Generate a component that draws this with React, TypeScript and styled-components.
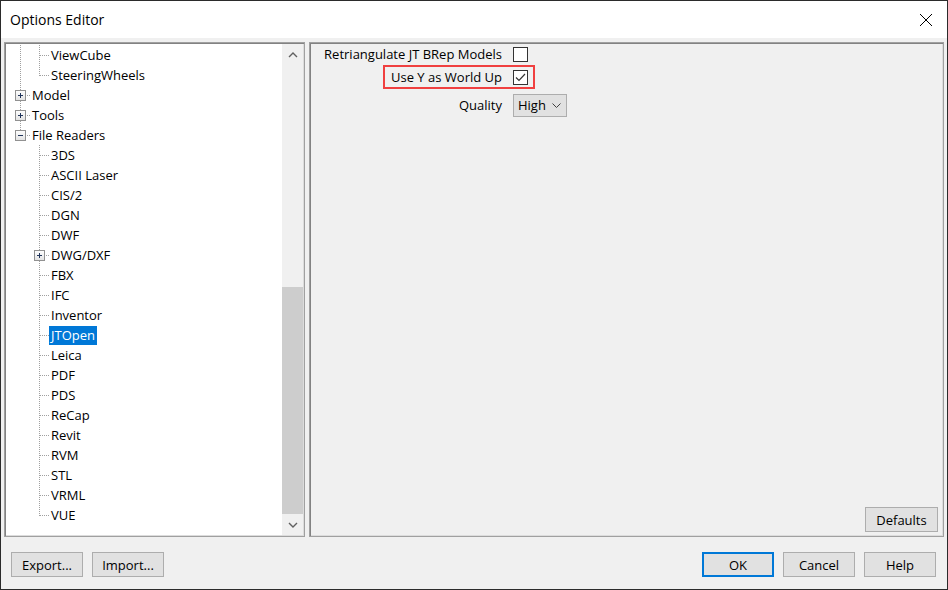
import React from 'react';
import styled, { createGlobalStyle } from 'styled-components';

const GlobalStyle = createGlobalStyle`
  html, body { margin: 0; padding: 0; background: #ffffff; }
  body { font-family: "Open Sans", "Noto Sans", sans-serif; font-size: 13px; color: #000; }
  * { box-sizing: border-box; }
`;

const Window = styled.div`
  width: 948px;
  height: 590px;
  border: 1px solid #2b2b2b;
  display: flex;
  flex-direction: column;
  background: #f0f0f0;
  overflow: hidden;
`;

const TitleBar = styled.div`
  height: 37px;
  flex-shrink: 0;
  background: #ffffff;
  display: flex;
  align-items: center;
  justify-content: space-between;
  padding-left: 9px;
  font-size: 14px;
  line-height: 20px;
`;

const CloseButton = styled.div`
  width: 42px;
  height: 37px;
  display: flex;
  align-items: center;
  justify-content: center;
`;

const Body = styled.div`
  flex: 1;
  display: flex;
  flex-direction: column;
  padding: 4px 3px 0 3px;
`;

const Main = styled.div`
  height: 495px;
  display: flex;
  gap: 4px;
`;

const Sunken = styled.div`
  border: 1px solid #a0a0a0;
  box-shadow: inset 1px 1px 0 #828282, inset -1px -1px 0 #dcdcdc;
  padding: 1px;
`;

const TreePanel = styled(Sunken)`
  width: 301px;
  background: #ffffff;
  display: flex;
`;

const TreeContent = styled.div`
  flex: 1;
  overflow: hidden;
  padding: 1px 0 0 5px;
  display: flex;
  flex-direction: column;
`;

const Row = styled.div`
  height: 20px;
  flex-shrink: 0;
  display: flex;
  align-items: center;
`;

const Cell = styled.div`
  width: 19px;
  height: 20px;
  flex-shrink: 0;
  svg { display: block; }
`;

const Label = styled.span<{ $selected?: boolean }>`
  padding: 0 2px 0 2px;
  height: 19px;
  line-height: 19px;
  white-space: nowrap;
  background: ${(p) => (p.$selected ? '#0078d7' : 'transparent')};
  color: ${(p) => (p.$selected ? '#ffffff' : '#000000')};
`;

const ScrollBar = styled.div`
  width: 21px;
  background: #f0f0f0;
  display: flex;
  flex-direction: column;
`;

const ScrollButton = styled.div`
  height: 21px;
  display: flex;
  align-items: center;
  justify-content: center;
`;

const Track = styled.div`
  flex: 1;
  display: flex;
  flex-direction: column;
  justify-content: flex-end;
`;

const Thumb = styled.div`
  height: 227px;
  background: #cdcdcd;
`;

const RightPanel = styled(Sunken)`
  flex: 1;
  background: #f0f0f0;
  display: flex;
  flex-direction: column;
  justify-content: space-between;
  align-items: stretch;
`;

const Form = styled.div`
  display: flex;
  flex-direction: column;
`;

const FormRow = styled.div<{ $top: number; $h: number }>`
  position: relative;
  display: flex;
  align-items: center;
  margin-top: ${(p) => p.$top}px;
  height: ${(p) => p.$h}px;
`;

const FieldLabel = styled.div`
  width: 191px;
  text-align: right;
  white-space: nowrap;
  line-height: 18px;
`;

const Control = styled.div`
  margin-left: 11px;
  display: flex;
  align-items: center;
`;

const CheckBox = styled.div`
  width: 15px;
  height: 15px;
  border: 1px solid #333333;
  background: #ffffff;
  display: flex;
  align-items: center;
  justify-content: center;
`;

const Callout = styled.div`
  position: absolute;
  left: 72px;
  top: -2px;
  width: 152px;
  height: 24px;
  border: 2px solid #f04040;
  pointer-events: none;
`;

const Select = styled.div`
  width: 54px;
  height: 23px;
  background: #e1e1e1;
  border: 1px solid #adadad;
  display: flex;
  align-items: center;
  justify-content: space-between;
  padding: 0 5px 0 4px;
  line-height: 18px;
`;

const Button = styled.div<{ $primary?: boolean; $w?: number }>`
  width: ${(p) => p.$w ?? 72}px;
  height: 25px;
  background: #e1e1e1;
  border: 1px solid ${(p) => (p.$primary ? '#0078d7' : '#adadad')};
  box-shadow: ${(p) => (p.$primary ? 'inset 0 0 0 1px #0078d7' : 'none')};
  display: flex;
  align-items: center;
  justify-content: center;
  line-height: 18px;
`;

const DefaultsWrap = styled.div`
  display: flex;
  justify-content: flex-end;
  padding: 0 4px 3px 0;
`;

const Footer = styled.div`
  display: flex;
  justify-content: space-between;
  padding: 15px 8px 0 7px;
`;

const ButtonGroup = styled.div`
  display: flex;
  gap: 9px;
`;

type Connector = 'tee' | 'end';
type Guide = 'pass' | 'none';

interface TreeItem {
  label: string;
  guides: Guide[];
  conn: Connector;
  expander?: 'plus' | 'minus';
  selected?: boolean;
}

const DOT = '#a0a0a0';

const GuideCell = ({ guide }: { guide: Guide }) => (
  <Cell>
    <svg width="19" height="20">
      {guide === 'pass' && (
        <line x1="9.5" y1="0" x2="9.5" y2="20" stroke={DOT} strokeDasharray="1 1" />
      )}
    </svg>
  </Cell>
);

const ConnectorCell = ({ conn, expander }: { conn: Connector; expander?: 'plus' | 'minus' }) => (
  <Cell>
    <svg width="19" height="20">
      <line x1="9.5" y1="0" x2="9.5" y2={conn === 'tee' ? 20 : 11} stroke={DOT} strokeDasharray="1 1" />
      <line x1="10" y1="10.5" x2="19" y2="10.5" stroke={DOT} strokeDasharray="1 1" />
      {expander && (
        <g>
          <defs>
            <linearGradient id="bx" x1="0" y1="0" x2="0" y2="1">
              <stop offset="0" stopColor="#ffffff" />
              <stop offset="1" stopColor="#e2e2e2" />
            </linearGradient>
          </defs>
          <rect x="4.5" y="5.5" width="10" height="10" fill="url(#bx)" stroke="#919191" />
          <line x1="7" y1="10.5" x2="12" y2="10.5" stroke="#22365c" />
          {expander === 'plus' && <line x1="9.5" y1="8" x2="9.5" y2="13" stroke="#22365c" />}
        </g>
      )}
    </svg>
  </Cell>
);

const items: TreeItem[] = [
  { label: 'ViewCube', guides: ['pass'], conn: 'tee' },
  { label: 'SteeringWheels', guides: ['pass'], conn: 'end' },
  { label: 'Model', guides: [], conn: 'tee', expander: 'plus' },
  { label: 'Tools', guides: [], conn: 'tee', expander: 'plus' },
  { label: 'File Readers', guides: [], conn: 'end', expander: 'minus' },
  ...[
    '3DS', 'ASCII Laser', 'CIS/2', 'DGN', 'DWF', 'DWG/DXF', 'FBX', 'IFC', 'Inventor',
    'JTOpen', 'Leica', 'PDF', 'PDS', 'ReCap', 'Revit', 'RVM', 'STL', 'VRML', 'VUE',
  ].map<TreeItem>((label, i, arr) => ({
    label,
    guides: ['none'],
    conn: i === arr.length - 1 ? 'end' : 'tee',
    expander: label === 'DWG/DXF' ? 'plus' : undefined,
    selected: label === 'JTOpen',
  })),
];

const Chevron = ({ up }: { up?: boolean }) => (
  <svg width="10" height="6" viewBox="0 0 10 6">
    <polyline
      points={up ? '1,5 5,1 9,5' : '1,1 5,5 9,1'}
      fill="none"
      stroke="#606060"
      strokeWidth="1.4"
    />
  </svg>
);

export default function App() {
  return (
    <>
      <GlobalStyle />
      <Window>
        <TitleBar>
          <span>Options Editor</span>
          <CloseButton>
            <svg width="14" height="14" viewBox="0 0 14 14">
              <path d="M1 1 L13 13 M13 1 L1 13" stroke="#000" strokeWidth="1" fill="none" />
            </svg>
          </CloseButton>
        </TitleBar>
        <Body>
          <Main>
            <TreePanel>
              <TreeContent>
                {items.map((it) => (
                  <Row key={it.label}>
                    {it.guides.map((g, i) => (
                      <GuideCell key={i} guide={g} />
                    ))}
                    <ConnectorCell conn={it.conn} expander={it.expander} />
                    <Label $selected={it.selected}>{it.label}</Label>
                  </Row>
                ))}
              </TreeContent>
              <ScrollBar>
                <ScrollButton>
                  <Chevron up />
                </ScrollButton>
                <Track>
                  <Thumb />
                </Track>
                <ScrollButton>
                  <Chevron />
                </ScrollButton>
              </ScrollBar>
            </TreePanel>
            <RightPanel>
              <Form>
                <FormRow $top={0} $h={20}>
                  <FieldLabel>Retriangulate JT BRep Models</FieldLabel>
                  <Control>
                    <CheckBox />
                  </Control>
                </FormRow>
                <FormRow $top={3} $h={20}>
                  <FieldLabel>Use Y as World Up</FieldLabel>
                  <Control>
                    <CheckBox>
                      <svg width="11" height="9" viewBox="0 0 11 9">
                        <polyline points="1,4.5 4,7.5 10,1" fill="none" stroke="#333" strokeWidth="1.2" />
                      </svg>
                    </CheckBox>
                  </Control>
                  <Callout />
                </FormRow>
                <FormRow $top={6} $h={24}>
                  <FieldLabel>Quality</FieldLabel>
                  <Control>
                    <Select>
                      <span>High</span>
                      <svg width="9" height="5" viewBox="0 0 9 5">
                        <polyline points="0.5,0.5 4.5,4.5 8.5,0.5" fill="none" stroke="#404040" strokeWidth="1" />
                      </svg>
                    </Select>
                  </Control>
                </FormRow>
              </Form>
              <DefaultsWrap>
                <Button $w={73}>Defaults</Button>
              </DefaultsWrap>
            </RightPanel>
          </Main>
          <Footer>
            <ButtonGroup>
              <Button>Export...</Button>
              <Button>Import...</Button>
            </ButtonGroup>
            <ButtonGroup>
              <Button $primary>OK</Button>
              <Button>Cancel</Button>
              <Button>Help</Button>
            </ButtonGroup>
          </Footer>
        </Body>
      </Window>
    </>
  );
}
